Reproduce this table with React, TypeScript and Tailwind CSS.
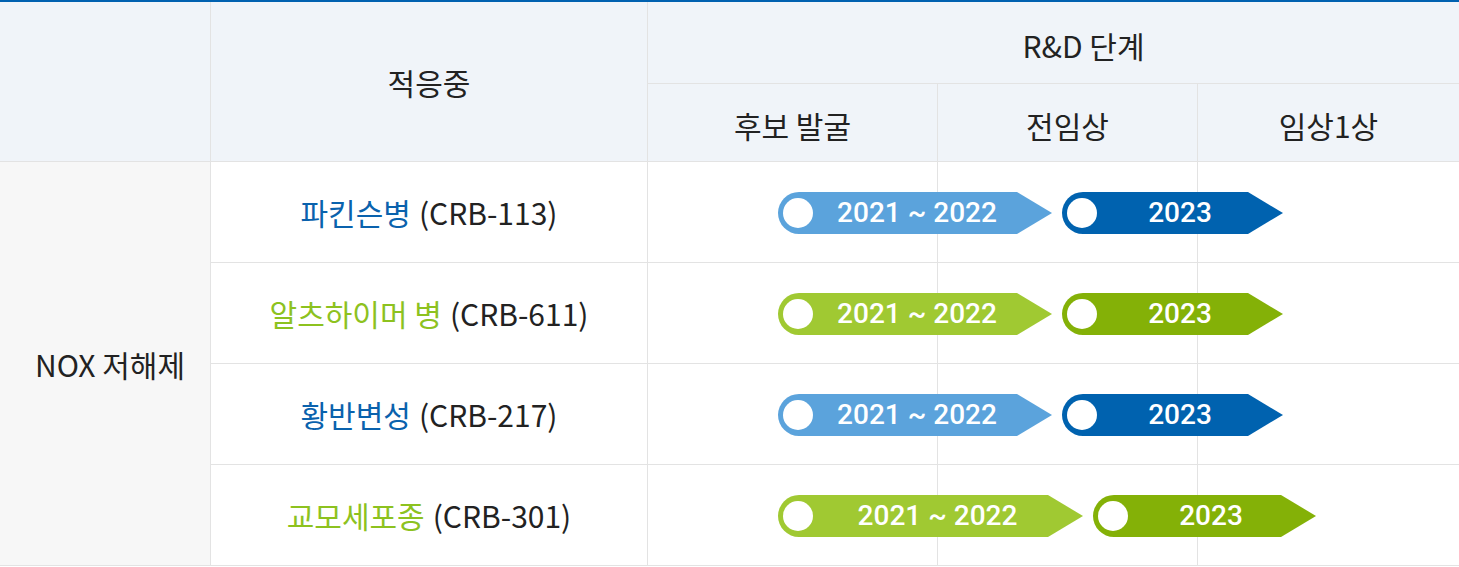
const FONT = "font-['Noto_Sans_CJK_KR','Noto_Sans',sans-serif]";

type BarSpec = {
  body: string;
  fill: string;
  tri: string;
  pad: string;
  label: string;
};

const ROWS: {
  name: string;
  color: string;
  code: string;
  bars: BarSpec[];
}[] = [
  {
    name: "파킨슨병",
    color: "text-[#0a62ad]",
    code: "(CRB-113)",
    bars: [
      { body: "w-[239px]", fill: "bg-[#5ba3dc]", tri: "#5ba3dc", pad: "pl-[4px]", label: "2021 ~ 2022" },
      { body: "w-[186px]", fill: "bg-[#0062af]", tri: "#0062af", pad: "pl-[15px]", label: "2023" },
    ],
  },
  {
    name: "알츠하이머 병",
    color: "text-[#8dc21f]",
    code: "(CRB-611)",
    bars: [
      { body: "w-[239px]", fill: "bg-[#a0c932]", tri: "#a0c932", pad: "pl-[4px]", label: "2021 ~ 2022" },
      { body: "w-[186px]", fill: "bg-[#84b107]", tri: "#84b107", pad: "pl-[15px]", label: "2023" },
    ],
  },
  {
    name: "황반변성",
    color: "text-[#0a62ad]",
    code: "(CRB-217)",
    bars: [
      { body: "w-[239px]", fill: "bg-[#5ba3dc]", tri: "#5ba3dc", pad: "pl-[4px]", label: "2021 ~ 2022" },
      { body: "w-[186px]", fill: "bg-[#0062af]", tri: "#0062af", pad: "pl-[15px]", label: "2023" },
    ],
  },
  {
    name: "교모세포종",
    color: "text-[#8dc21f]",
    code: "(CRB-301)",
    bars: [
      { body: "w-[270px]", fill: "bg-[#a0c932]", tri: "#a0c932", pad: "pl-[14px]", label: "2021 ~ 2022" },
      { body: "w-[188px]", fill: "bg-[#84b107]", tri: "#84b107", pad: "pl-[13px]", label: "2023" },
    ],
  },
];

const ROW_START = ["row-start-3", "row-start-4", "row-start-5", "row-start-6"];

function Bar({ bar }: { bar: BarSpec }) {
  return (
    <div className="flex h-[42px] items-center">
      <div className={`flex h-full items-center rounded-l-full ${bar.body} ${bar.fill}`}>
        <span className="ml-[5px] h-[30px] w-[30px] shrink-0 rounded-full bg-white" />
        <span
          className={`flex-1 text-center font-['Roboto',sans-serif] text-[28px] font-medium leading-none text-white ${bar.pad}`}
        >
          {bar.label}
        </span>
      </div>
      <svg width="35" height="42" viewBox="0 0 35 42" className="shrink-0">
        <polygon points="0,0 35,21 0,42" fill={bar.tri} />
      </svg>
    </div>
  );
}

export default function App() {
  const line = "border-[#e3e3e3]";
  return (
    <div className={`w-[1459px] bg-white text-[#222] ${FONT}`}>
      <div className="border-t-2 border-[#0061b0]">
        <div className="grid grid-cols-[211px_437px_290px_260px_1fr] grid-rows-[82px_78px_101px_101px_101px_101px] text-[30px] leading-none">
          {/* header */}
          <div className={`col-start-1 row-span-2 row-start-1 border-r border-b bg-[#f0f4f9] ${line}`} />
          <div
            className={`col-start-2 row-span-2 row-start-1 flex items-center justify-center border-r border-b bg-[#f0f4f9] ${line}`}
          >
            적응중
          </div>
          <div
            className={`col-span-3 col-start-3 row-start-1 flex items-center justify-center border-b bg-[#f0f4f9] pt-[4px] pl-[60px] ${line}`}
          >
            R&amp;D 단계
          </div>
          <div className={`col-start-3 row-start-2 flex items-center justify-center border-r border-b bg-[#f0f4f9] pt-[4px] ${line}`}>
            후보 발굴
          </div>
          <div className={`col-start-4 row-start-2 flex items-center justify-center border-r border-b bg-[#f0f4f9] pt-[4px] ${line}`}>
            전임상
          </div>
          <div className={`col-start-5 row-start-2 flex items-center justify-center border-b bg-[#f0f4f9] pt-[4px] ${line}`}>
            임상1상
          </div>

          {/* left group */}
          <div
            className={`col-start-1 row-span-4 row-start-3 flex items-center justify-center border-r border-b bg-[#f7f7f7] pl-[10px] ${line}`}
          >
            NOX 저해제
          </div>

          {ROWS.map((r, i) => (
            <div key={r.code} className="contents">
              <div
                className={`col-start-2 ${ROW_START[i]} flex items-center justify-center border-r border-b ${line}`}
              >
                <span className={r.color}>{r.name}</span>
                <span className="ml-[8px]">{r.code}</span>
              </div>
              <div className={`col-start-3 ${ROW_START[i]} border-r border-b ${line}`} />
              <div className={`col-start-4 ${ROW_START[i]} border-r border-b ${line}`} />
              <div className={`col-start-5 ${ROW_START[i]} border-b ${line}`} />
              <div className={`col-span-3 col-start-3 ${ROW_START[i]} flex items-center gap-[10px] pl-[130px]`}>
                {r.bars.map((b) => (
                  <Bar key={b.label} bar={b} />
                ))}
              </div>
            </div>
          ))}
        </div>
      </div>
    </div>
  );
}
